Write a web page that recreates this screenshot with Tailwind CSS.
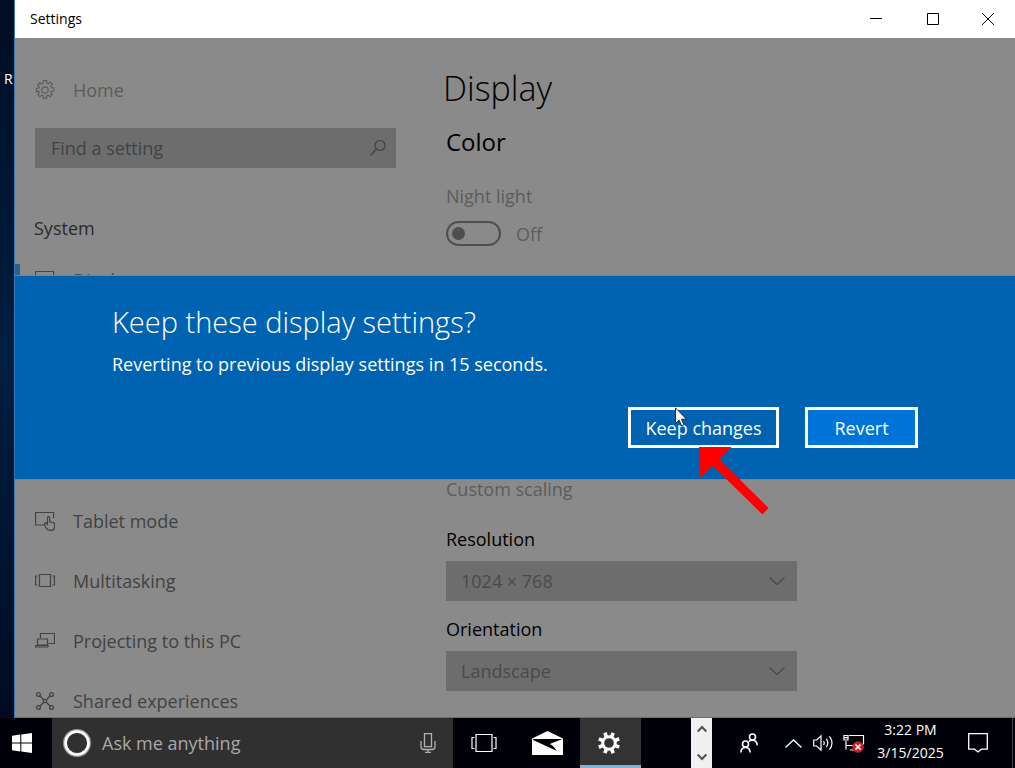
<!DOCTYPE html>
<html lang="en">
<head>
  <meta charset="UTF-8" />
  <meta name="viewport" content="width=device-width, initial-scale=1.0" />
  <title>Settings</title>
  <script src="https://cdn.jsdelivr.net/npm/@tailwindcss/browser@4"></script>
</head>

<body class="h-screen flex flex-col overflow-hidden bg-[#00142e] font-['Open_Sans','Noto_Sans',sans-serif] text-lg text-black">

  <!-- Desktop with the settings window -->
  <div class="flex-1 min-h-0 flex">
    <div class="w-[14px] shrink-0 overflow-hidden bg-linear-to-b from-[#000d24] via-[#001f42] to-[#000b22] pt-[69px] pl-1 text-sm leading-5 text-white">R</div>

    <div class="flex-1 min-w-0 flex flex-col border-l border-b border-[#3a78b4] bg-[#8a8a8a]">
      <!-- Title bar -->
      <header class="h-[38px] shrink-0 flex items-center bg-white pl-[15px]">
        <h1 class="flex-1 text-sm">Settings</h1>
        <button aria-label="Minimize" class="w-[57px] h-full flex items-center justify-center">
          <svg class="size-3" viewBox="0 0 12 12" stroke="#000" fill="none"><path d="M0 5.500h12" /></svg>
        </button>
        <button aria-label="Maximize" class="w-[57px] h-full flex items-center justify-center">
          <svg class="size-3" viewBox="0 0 12 12" stroke="#000" fill="none"><path d="M.5.500h11v11H.500z" /></svg>
        </button>
        <button aria-label="Close" class="w-[54px] h-full flex items-center justify-center">
          <svg class="size-3" viewBox="0 0 12 12" stroke="#000" fill="none"><path d="M0 0l12 12M12 0L0 12" /></svg>
        </button>
      </header>

      <div class="relative flex-1 min-h-0 flex overflow-hidden">
        <!-- Sidebar -->
        <aside class="w-[431px] shrink-0 pt-8 text-[#424242]">
          <a href="#" class="h-10 flex items-center gap-[18px] pl-5 text-[#5c5c5c]">
            <svg class="size-5" viewBox="0 0 20 20" fill="none" stroke="currentColor" stroke-width="1.200" stroke-linejoin="round">
              <path d="M8.2 3.100L8.400.700h3.200l.2 2.400 1.500.600 1.800-1.600 2.200 2.200-1.600 1.800.6 1.500 2.400.2v3.200l-2.400.2-.6 1.500 1.600 1.800-2.200 2.200-1.800-1.600-1.500.600-.2 2.400H8.400l-.2-2.400-1.500-.600-1.800 1.600-2.200-2.200 1.600-1.800-.6-1.500L1.300 11.600V8.400l2.400-.2.6-1.500-1.600-1.800 2.200-2.200 1.800 1.600z" />
              <circle cx="10" cy="10" r="3.200" />
            </svg>
            Home
          </a>

          <label class="mt-[18px] ml-5 mr-[50px] h-10 flex items-center bg-[#6d6d6d] pl-4 pr-[10px]">
            <input type="text" aria-label="Find a setting" placeholder="Find a setting" class="flex-1 min-w-0 bg-transparent outline-none placeholder:text-[#424242]" />
            <svg class="size-4 text-[#424242]" viewBox="0 0 16 16" fill="none" stroke="currentColor" stroke-width="1.200"><circle cx="10" cy="5.500" r="5" /><path d="M6.500 9L.500 15.500" /></svg>
          </label>

          <h2 class="mt-10 h-10 flex items-center pl-[19px] text-[#2b2b2b]">System</h2>

          <nav class="mt-3">
            <a href="#" class="h-10 flex items-center text-[#2c4f6b]">
              <span class="w-[5px] h-8 bg-[#2c6290]"></span>
              <svg class="ml-[15px] mr-[18px] size-5" viewBox="0 0 20 20" fill="none" stroke="currentColor" stroke-width="1.200"><path d="M.6 1.500h18v12H.600zM5 17h9" /></svg>
              Display
            </a>
            <div class="mt-[201px] flex flex-col gap-5">
              <a href="#" class="h-10 flex items-center gap-[18px] pl-5">
                <svg class="size-5" viewBox="0 0 20 20" fill="none" stroke="currentColor" stroke-width="1.200" stroke-linejoin="round"><path d="M11 14H.600V1.500h18v5.500" /><path d="M12.500 12.500V6.800q0-1.200 1.100-1.200t1.100 1.200v4l3.500.7q1.400.4 1.400 2v2q0 3.800-4 3.900-3.600 0-4.600-2.500l-1.400-3.700q-.2-1 .6-1.500 1-.1 2.300 1.900z" fill="#8a8a8a" /></svg>
                Tablet mode
              </a>
              <a href="#" class="h-10 flex items-center gap-[18px] pl-5">
                <svg class="size-5" viewBox="0 0 20 20" fill="none" stroke="currentColor" stroke-width="1.200"><path d="M4.500 3.500h11v12h-11zM2.500 5H.600v9h1.900M17.500 5h1.900v9h-1.900" /></svg>
                Multitasking
              </a>
              <a href="#" class="h-10 flex items-center gap-[18px] pl-5">
                <svg class="size-5" viewBox="0 0 20 20" fill="none" stroke="currentColor" stroke-width="1.200"><path d="M5.500 7V2.500h14v10h-6M2.500 8h10v6h-10zM.600 14.500h12.400v1.500H.600z" /></svg>
                Projecting to this PC
              </a>
              <a href="#" class="h-10 flex items-center gap-[18px] pl-5">
                <svg class="size-5" viewBox="0 0 20 20" fill="none" stroke="currentColor" stroke-width="1.300"><circle cx="3.500" cy="3.500" r="1.900" /><circle cx="16.500" cy="3.500" r="1.900" /><circle cx="3.500" cy="16.500" r="1.900" /><circle cx="16.500" cy="16.500" r="1.900" /><circle cx="10" cy="10" r="1.700" /><path d="M5 5l3.700 3.700M15 5l-3.700 3.700M5 15l3.700-3.700M15 15l-3.700-3.700" /></svg>
                Shared experiences
              </a>
            </div>
          </nav>
        </aside>

        <!-- Display page -->
        <main class="flex-1 min-w-0 pt-[26px] pr-5">
          <h2 class="-ml-[3px] text-[34px] leading-[48px] font-light">Display</h2>
          <h3 class="mt-[14px] text-2xl leading-8">Color</h3>

          <p id="night" class="mt-[26px] leading-6 text-[#5c5c5c]">Night light</p>
          <label class="mt-[13px] h-[25px] flex items-center gap-[15px] text-[#5c5c5c]">
            <input type="checkbox" role="switch" aria-labelledby="night" disabled class="appearance-none w-[55px] h-[25px] rounded-full border-2 border-[#4f4f4f] before:block before:size-[13px] before:mt-1 before:ml-1 before:rounded-full before:bg-[#4f4f4f]" />
            Off
          </label>

          <a href="#" class="mt-[231px] block leading-6 text-[#5c5c5c]">Custom scaling</a>

          <label for="resolution" class="mt-[26px] block leading-6">Resolution</label>
          <div class="mt-[10px] max-w-[351px] grid items-center bg-[#6d6d6d] text-[#4a4a4a]">
            <select id="resolution" class="col-start-1 row-start-1 appearance-none h-10 px-[15px]"><option>1024 × 768</option></select>
            <svg class="col-start-1 row-start-1 justify-self-end mr-3 w-4 h-2 pointer-events-none" viewBox="0 0 16 8" fill="none" stroke="currentColor" stroke-width="1.200"><path d="M.5.500L8 7.500 15.500.500" /></svg>
          </div>

          <label for="orientation" class="mt-4 block leading-6">Orientation</label>
          <div class="mt-[10px] max-w-[351px] grid items-center bg-[#6d6d6d] text-[#4a4a4a]">
            <select id="orientation" class="col-start-1 row-start-1 appearance-none h-10 px-[15px]"><option>Landscape</option></select>
            <svg class="col-start-1 row-start-1 justify-self-end mr-3 w-4 h-2 pointer-events-none" viewBox="0 0 16 8" fill="none" stroke="currentColor" stroke-width="1.200"><path d="M.5.500L8 7.500 15.500.500" /></svg>
          </div>
        </main>

        <!-- Confirmation dialog -->
        <div class="absolute inset-0 flex flex-col justify-center">
          <section role="dialog" aria-labelledby="dialogTitle" class="bg-[#0063b1] px-[97px] pt-[26px] pb-[31px] text-white outline outline-[#5f89ab]">
            <h2 id="dialogTitle" class="text-[29px] leading-10 font-light">Keep these display settings?</h2>
            <p class="mt-[10px] leading-6">Reverting to previous display settings in 15 seconds.</p>
            <div class="mt-[31px] flex justify-end gap-[26px]">
              <div class="relative">
                <button class="w-[151px] h-[41px] border-3 border-white">Keep changes</button>
                <svg class="absolute left-[47px] top-0 w-3 h-5" viewBox="0 0 12 20"><path d="M.5.800v15.700l3.600-3.400 2.500 5.700 2.300-1-2.400-5.600h5z" fill="#fff" stroke="#101c30" stroke-width=".9" /></svg>
                <svg class="absolute left-[71px] top-[39px] w-[70px] h-[70px]" viewBox="0 0 70 70"><path d="M0 1h32.500L20.500 13.500 69.500 62 63.500 68.500 14 20 0 33z" fill="#fe0000" /></svg>
              </div>
              <button class="w-[113px] h-[41px] border-3 border-white bg-[#0074d8]">Revert</button>
            </div>
          </section>
        </div>
      </div>
    </div>
  </div>

  <!-- Taskbar -->
  <footer class="h-[50px] shrink-0 flex bg-[#000008] text-white">
    <button aria-label="Start" class="w-[52px] flex items-center justify-center pr-2">
      <svg class="size-5" viewBox="0 0 20 20" fill="#fff"><path d="M0 2.700l8.300-1.200v8H0zM9.300 1.400L20 0v9.500H9.300zM0 10.500h8.300v8L0 17.300zM9.300 10.500H20V20L9.300 18.600z" /></svg>
    </button>
    <label class="w-[401px] flex items-center bg-[#303030] pl-[11px] pr-[17px]">
      <svg class="size-7" viewBox="0 0 28 28" fill="none"><circle cx="14" cy="14" r="12" stroke="#999" stroke-width="4" /><circle cx="14" cy="14" r="11.500" stroke="#fff" stroke-width="2.500" /></svg>
      <input type="text" aria-label="Ask me anything" placeholder="Ask me anything" class="ml-[11px] flex-1 min-w-0 bg-transparent outline-none placeholder:text-[#a8a8a8]" />
      <svg class="w-4 h-5" viewBox="0 0 16 20" fill="none" stroke="#b0b0b0" stroke-width="1.300"><path d="M4.500.700h7v13h-7zM1 8v5.500q0 3 3 3h8q3 0 3-3V8M8 16.500v3M5 19.300h6" /></svg>
    </label>
    <button aria-label="Task view" class="w-[61px] flex items-center justify-center">
      <svg class="w-[26px] h-5" viewBox="0 0 26 20" fill="none" stroke="#fff" stroke-width="1.200"><path d="M5 1.500h16v17H5zM3.500 4.500h-2.500v11h2.500M22.500 4.500h2.500v11h-2.500" /></svg>
    </button>
    <button aria-label="Mail" class="w-[66px] flex items-center justify-center">
      <svg class="w-[31px] h-6" viewBox="0 0 31 24"><path d="M0 7.500L15.500 0 31 7.500V24H0z" fill="#fff" /><path d="M1 8h29.500L19 12.500 25 20 1 9z" fill="#000008" /><path d="M18 13l4.500-1.500-1.500 3.500z" fill="#fff" /></svg>
    </button>
    <button aria-label="Settings" class="w-[61px] flex items-center justify-center bg-[#333] border-b-3 border-[#7fb0de] pr-1">
      <svg class="size-[22px] mt-[2px]" viewBox="0 0 22 22" fill="none" stroke="#fff"><circle cx="11" cy="11" r="6.300" stroke-width="3" /><path d="M11 4V0M11 18v4M4 11H0M18 11h4M6.050 6.050L3.200 3.200M15.950 15.950l2.850 2.850M6.050 15.950L3.200 18.800M15.950 6.050L18.800 3.200" stroke-width="3.600" transform="rotate(22.500 11 11)" /></svg>
    </button>
    <div class="flex-1"></div>

    <div class="w-[21px] flex flex-col items-center justify-between bg-[#f0f0f0] py-[7px]">
      <button aria-label="Scroll up"><svg class="block w-[10px] h-2" viewBox="0 0 10 8" fill="none" stroke="#505050" stroke-width="2"><path d="M.7 6.500L5 2l4.300 4.500" /></svg></button>
      <button aria-label="Scroll down"><svg class="block w-[10px] h-2" viewBox="0 0 10 8" fill="none" stroke="#505050" stroke-width="2"><path d="M.7 1.500L5 6l4.300-4.500" /></svg></button>
    </div>

    <button aria-label="People" class="w-[73px] flex items-center justify-center">
      <svg class="w-[18px] h-5" viewBox="0 0 18 20" fill="none" stroke="#fff" stroke-width="1.600"><circle cx="12.500" cy="4" r="3" /><circle cx="5.500" cy="11" r="3" /><path d="M.8 19.500q.4-5 4.700-5 4.300 0 4.700 5M8.800 8.500q1.400-1.200 3.700-1.200 4.300 0 4.700 5" /></svg>
    </button>
    <button aria-label="Show hidden icons" class="w-[17px] flex items-center justify-center">
      <svg class="w-[17px] h-[9px]" viewBox="0 0 17 9" fill="none" stroke="#fff" stroke-width="1.300"><path d="M.5 8.500l8-7.500 8 7.500" /></svg>
    </button>
    <button aria-label="Volume" class="ml-[11px] w-[21px] flex items-center justify-center">
      <svg class="w-[21px] h-[18px]" viewBox="0 0 21 18" fill="none" stroke="#fff" stroke-width="1.200"><path d="M.7 6h3L8 2v14l-4.300-4h-3z" /><path d="M10.500 7q1.500 2 0 4M13.300 4.800q3 4.200 0 8.400M16.500 2.300q5 6.700 0 13.400" /></svg>
    </button>
    <button aria-label="Network" class="ml-[9px] w-[22px] flex items-center justify-center">
      <svg class="w-[22px] h-5" viewBox="0 0 22 20" fill="none" stroke="#fff" stroke-width="1.200"><path d="M6 2.500h14.500v9M3 8v8.500M3 12.500h7M7 17h4" /><path d="M1 2.500h4v4.500H1zM1 4.700h4" /><circle cx="15" cy="14" r="5.800" fill="#c8202c" stroke="none" /><path d="M12.500 11.500l5 5M17.500 11.500l-5 5" stroke-width="1.600" /></svg>
    </button>
    <div class="ml-[6px] w-[79px] flex flex-col justify-center text-center text-sm leading-[23px] pb-1">
      <time>3:22 PM</time>
      <time>3/15/2025</time>
    </div>
    <button aria-label="Notifications" class="w-[56px] flex items-center justify-center">
      <svg class="w-5 h-5" viewBox="0 0 20 20" fill="none" stroke="#fff" stroke-width="1.300"><path d="M.7.700h18.600v15.500h-6L10 19l-3.300-2.800h-6z" /></svg>
    </button>
    <div class="mr-[2px] w-[7px] border-r border-[#3c4656]"></div>
  </footer>
</body>
</html>
